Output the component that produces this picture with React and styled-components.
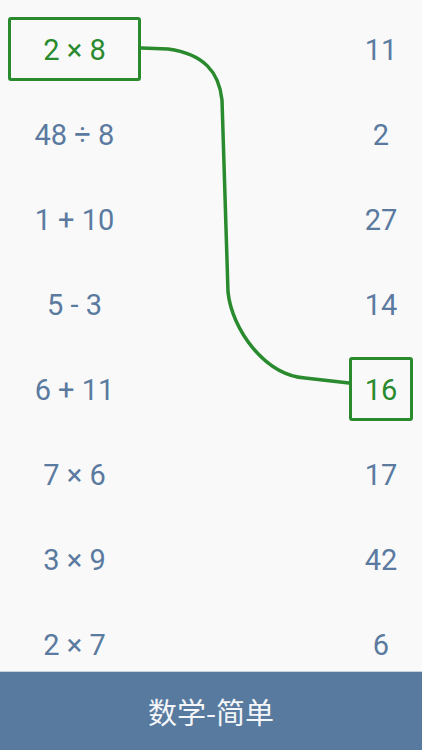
import React from 'react';
import styled, { createGlobalStyle } from 'styled-components';

const left = ['2 × 8', '48 ÷ 8', '1 + 10', '5 - 3', '6 + 11', '7 × 6', '3 × 9', '2 × 7'];
const right = ['11', '2', '27', '14', '16', '17', '42', '6'];

function App() {
  return (
    <>
      <GlobalStyle />
      <Page>
        <Board>
          <Column>
            {left.map((q, i) => (
              <LeftCell key={q} selected={i === 0}>{q}</LeftCell>
            ))}
          </Column>
          <Column>
            {right.map((a, i) => (
              <RightCell key={a} selected={i === 4}>{a}</RightCell>
            ))}
          </Column>
          <Link viewBox="0 0 422 671" width="422" height="671">
            <path
              d="M141 48 L168 49 C204 54 219 72 222 100 L228 292 C232 330 265 375 305 378 L349 383"
              fill="none"
              stroke="#2a8a2e"
              strokeWidth="3.5"
              strokeLinecap="round"
              strokeLinejoin="round"
            />
          </Link>
        </Board>
        <Footer>数学-简单</Footer>
      </Page>
    </>
  );
}

export default App;

const GlobalStyle = createGlobalStyle`
  body {
    margin: 0;
    background: #f9f9f9;
    font-family: Roboto, "Noto Sans CJK SC", sans-serif;
  }
`;

const Page = styled.div`
  width: 422px;
  height: 750px;
  display: flex;
  flex-direction: column;
  overflow: hidden;
`;

const Board = styled.div`
  position: relative;
  flex: 1;
  display: flex;
  justify-content: space-between;
  padding: 17px 9px 0 8px;
  overflow: hidden;
`;

const Column = styled.div`
  display: flex;
  flex-direction: column;
  gap: 21px;
`;

const Cell = styled.div`
  height: 64px;
  flex-shrink: 0;
  box-sizing: border-box;
  display: flex;
  align-items: center;
  justify-content: center;
  padding-top: 2px;
  font-size: 29px;
  color: ${p => (p.selected ? '#2a8a2e' : '#5b7aa0')};
  border: 3px solid ${p => (p.selected ? '#2a8a2e' : 'transparent')};
  border-radius: 3px;
`;

const LeftCell = styled(Cell)`
  width: 133px;
`;

const RightCell = styled(Cell)`
  width: 64px;
`;

const Link = styled.svg`
  position: absolute;
  left: 0;
  top: 0;
  pointer-events: none;
`;

const Footer = styled.div`
  height: 79px;
  flex-shrink: 0;
  background: #587a9f;
  border-top: 1px solid #c9d3de;
  box-sizing: border-box;
  display: flex;
  align-items: center;
  justify-content: center;
  color: #f4f6f9;
  font-size: 29px;
  font-family: "Noto Sans CJK SC", sans-serif;
`;
